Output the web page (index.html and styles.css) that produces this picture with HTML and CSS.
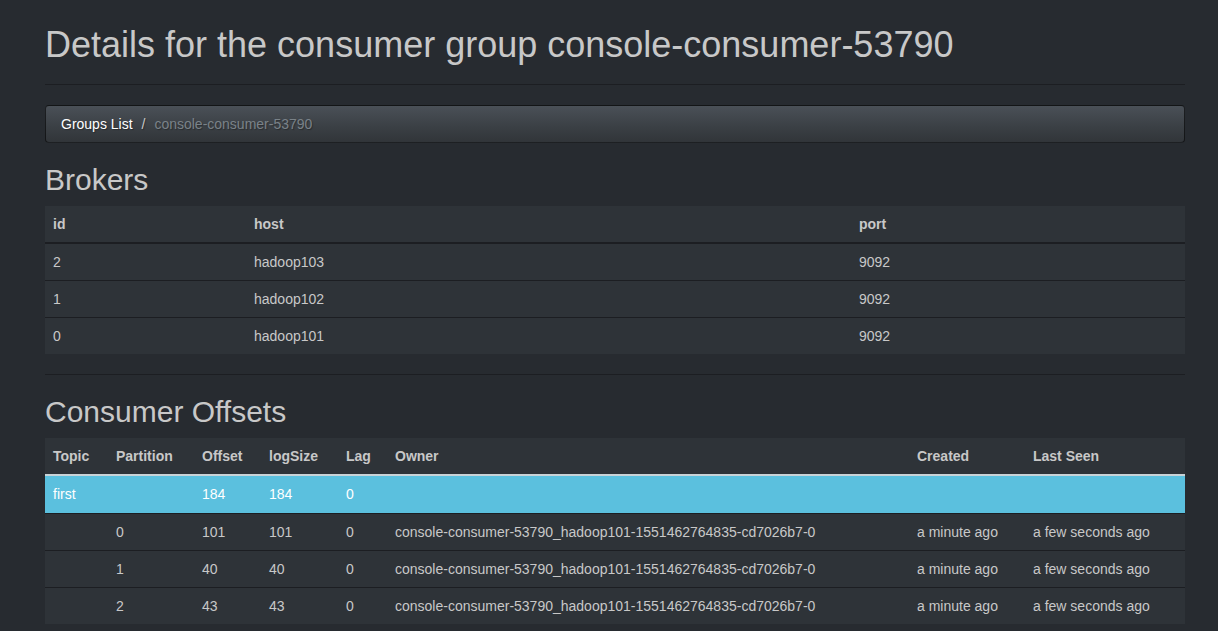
FILE: index.html
```html
<!DOCTYPE html>
<html lang="en">
<head>
<meta charset="utf-8">
<title>Consumer group console-consumer-53790</title>
<link rel="stylesheet" href="styles.css">
</head>
<body>
<div class="container">
  <div class="page-header">
    <h1>Details for the consumer group console-consumer-53790</h1>
  </div>
  <ol class="breadcrumb">
    <li><a href="#">Groups List</a></li>
    <li class="active">console-consumer-53790</li>
  </ol>

  <h2>Brokers</h2>
  <table class="table brokers">
    <colgroup><col class="c-id"><col class="c-host"><col></colgroup>
    <thead>
      <tr><th>id</th><th>host</th><th>port</th></tr>
    </thead>
    <tbody>
      <tr><td>2</td><td>hadoop103</td><td>9092</td></tr>
      <tr><td>1</td><td>hadoop102</td><td>9092</td></tr>
      <tr><td>0</td><td>hadoop101</td><td>9092</td></tr>
    </tbody>
  </table>

  <hr class="divider">

  <h2>Consumer Offsets</h2>
  <table class="table offsets">
    <colgroup>
      <col class="c-topic"><col class="c-part"><col class="c-off"><col class="c-log"><col class="c-lag"><col class="c-owner"><col class="c-created"><col>
    </colgroup>
    <thead>
      <tr><th>Topic</th><th>Partition</th><th>Offset</th><th>logSize</th><th>Lag</th><th>Owner</th><th>Created</th><th>Last Seen</th></tr>
    </thead>
    <tbody>
      <tr class="info"><td>first</td><td></td><td>184</td><td>184</td><td>0</td><td></td><td></td><td></td></tr>
      <tr><td></td><td>0</td><td>101</td><td>101</td><td>0</td><td>console-consumer-53790_hadoop101-1551462764835-cd7026b7-0</td><td>a minute ago</td><td>a few seconds ago</td></tr>
      <tr><td></td><td>1</td><td>40</td><td>40</td><td>0</td><td>console-consumer-53790_hadoop101-1551462764835-cd7026b7-0</td><td>a minute ago</td><td>a few seconds ago</td></tr>
      <tr><td></td><td>2</td><td>43</td><td>43</td><td>0</td><td>console-consumer-53790_hadoop101-1551462764835-cd7026b7-0</td><td>a minute ago</td><td>a few seconds ago</td></tr>
    </tbody>
  </table>
</div>
</body>
</html>
```

FILE: styles.css
```css
html, body {
  margin: 0;
  padding: 0;
}
body {
  background: #272b30;
  color: #c8c8c8;
  font-family: "Liberation Sans", Arial, Helvetica, sans-serif;
  font-size: 14px;
  line-height: 20px;
}
.container {
  width: 1140px;
  margin-left: 45px;
  padding-top: 25px;
}
.page-header {
  padding-bottom: 9px;
  margin: 0 0 20px;
  border-bottom: 1px solid #1c1e22;
}
h1 {
  margin: 0 0 10px;
  font-size: 36px;
  font-weight: 500;
  line-height: 1.1;
  color: #c8c8c8;
}
h2 {
  margin: 20px 0 10px;
  font-size: 30px;
  font-weight: 500;
  line-height: 33px;
  color: #c8c8c8;
}
.breadcrumb {
  list-style: none;
  margin: 0 0 20px;
  padding: 8px 15px;
  border: 1px solid rgba(0, 0, 0, 0.6);
  border-radius: 4px;
  background-image: linear-gradient(#4a5057, #3a3f44 60%, #313539);
  text-shadow: 1px 1px 1px rgba(0, 0, 0, 0.3);
  display: flex;
  gap: 4px;
}
.breadcrumb li + li::before {
  content: "/\00a0";
  padding: 0 5px;
  color: #c8c8c8;
}
.breadcrumb a {
  color: #fff;
  text-decoration: none;
}
.breadcrumb .active {
  color: #7a8288;
}
.table {
  width: 100%;
  border-collapse: collapse;
  border-spacing: 0;
  table-layout: fixed;
  background: #2e3338;
  margin-bottom: 20px;
}
.table th,
.table td {
  padding: 8px;
  text-align: left;
  vertical-align: top;
  white-space: nowrap;
}
.table th {
  font-weight: bold;
  color: #c8c8c8;
  border-bottom: 2px solid #1c1e22;
}
.table td {
  border-top: 1px solid #1c1e22;
}
.table tbody tr:first-child td {
  border-top: 0;
}
.c-id { width: 201px; }
.c-host { width: 605px; }
.c-topic { width: 63px; }
.c-part { width: 86px; }
.c-off { width: 67px; }
.c-log { width: 77px; }
.c-lag { width: 49px; }
.c-owner { width: 522px; }
.c-created { width: 116px; }
.offsets th {
  border-bottom: 2px solid #c9d3d7;
}
.offsets tr.info td {
  background: #5bc0de;
  color: #fff;
  padding-bottom: 9px;
  border-bottom: 1px solid #1c1e22;
}
.divider {
  border: 0;
  border-top: 1px solid #1c1e22;
  margin: 20px 0;
  height: 0;
}
```
